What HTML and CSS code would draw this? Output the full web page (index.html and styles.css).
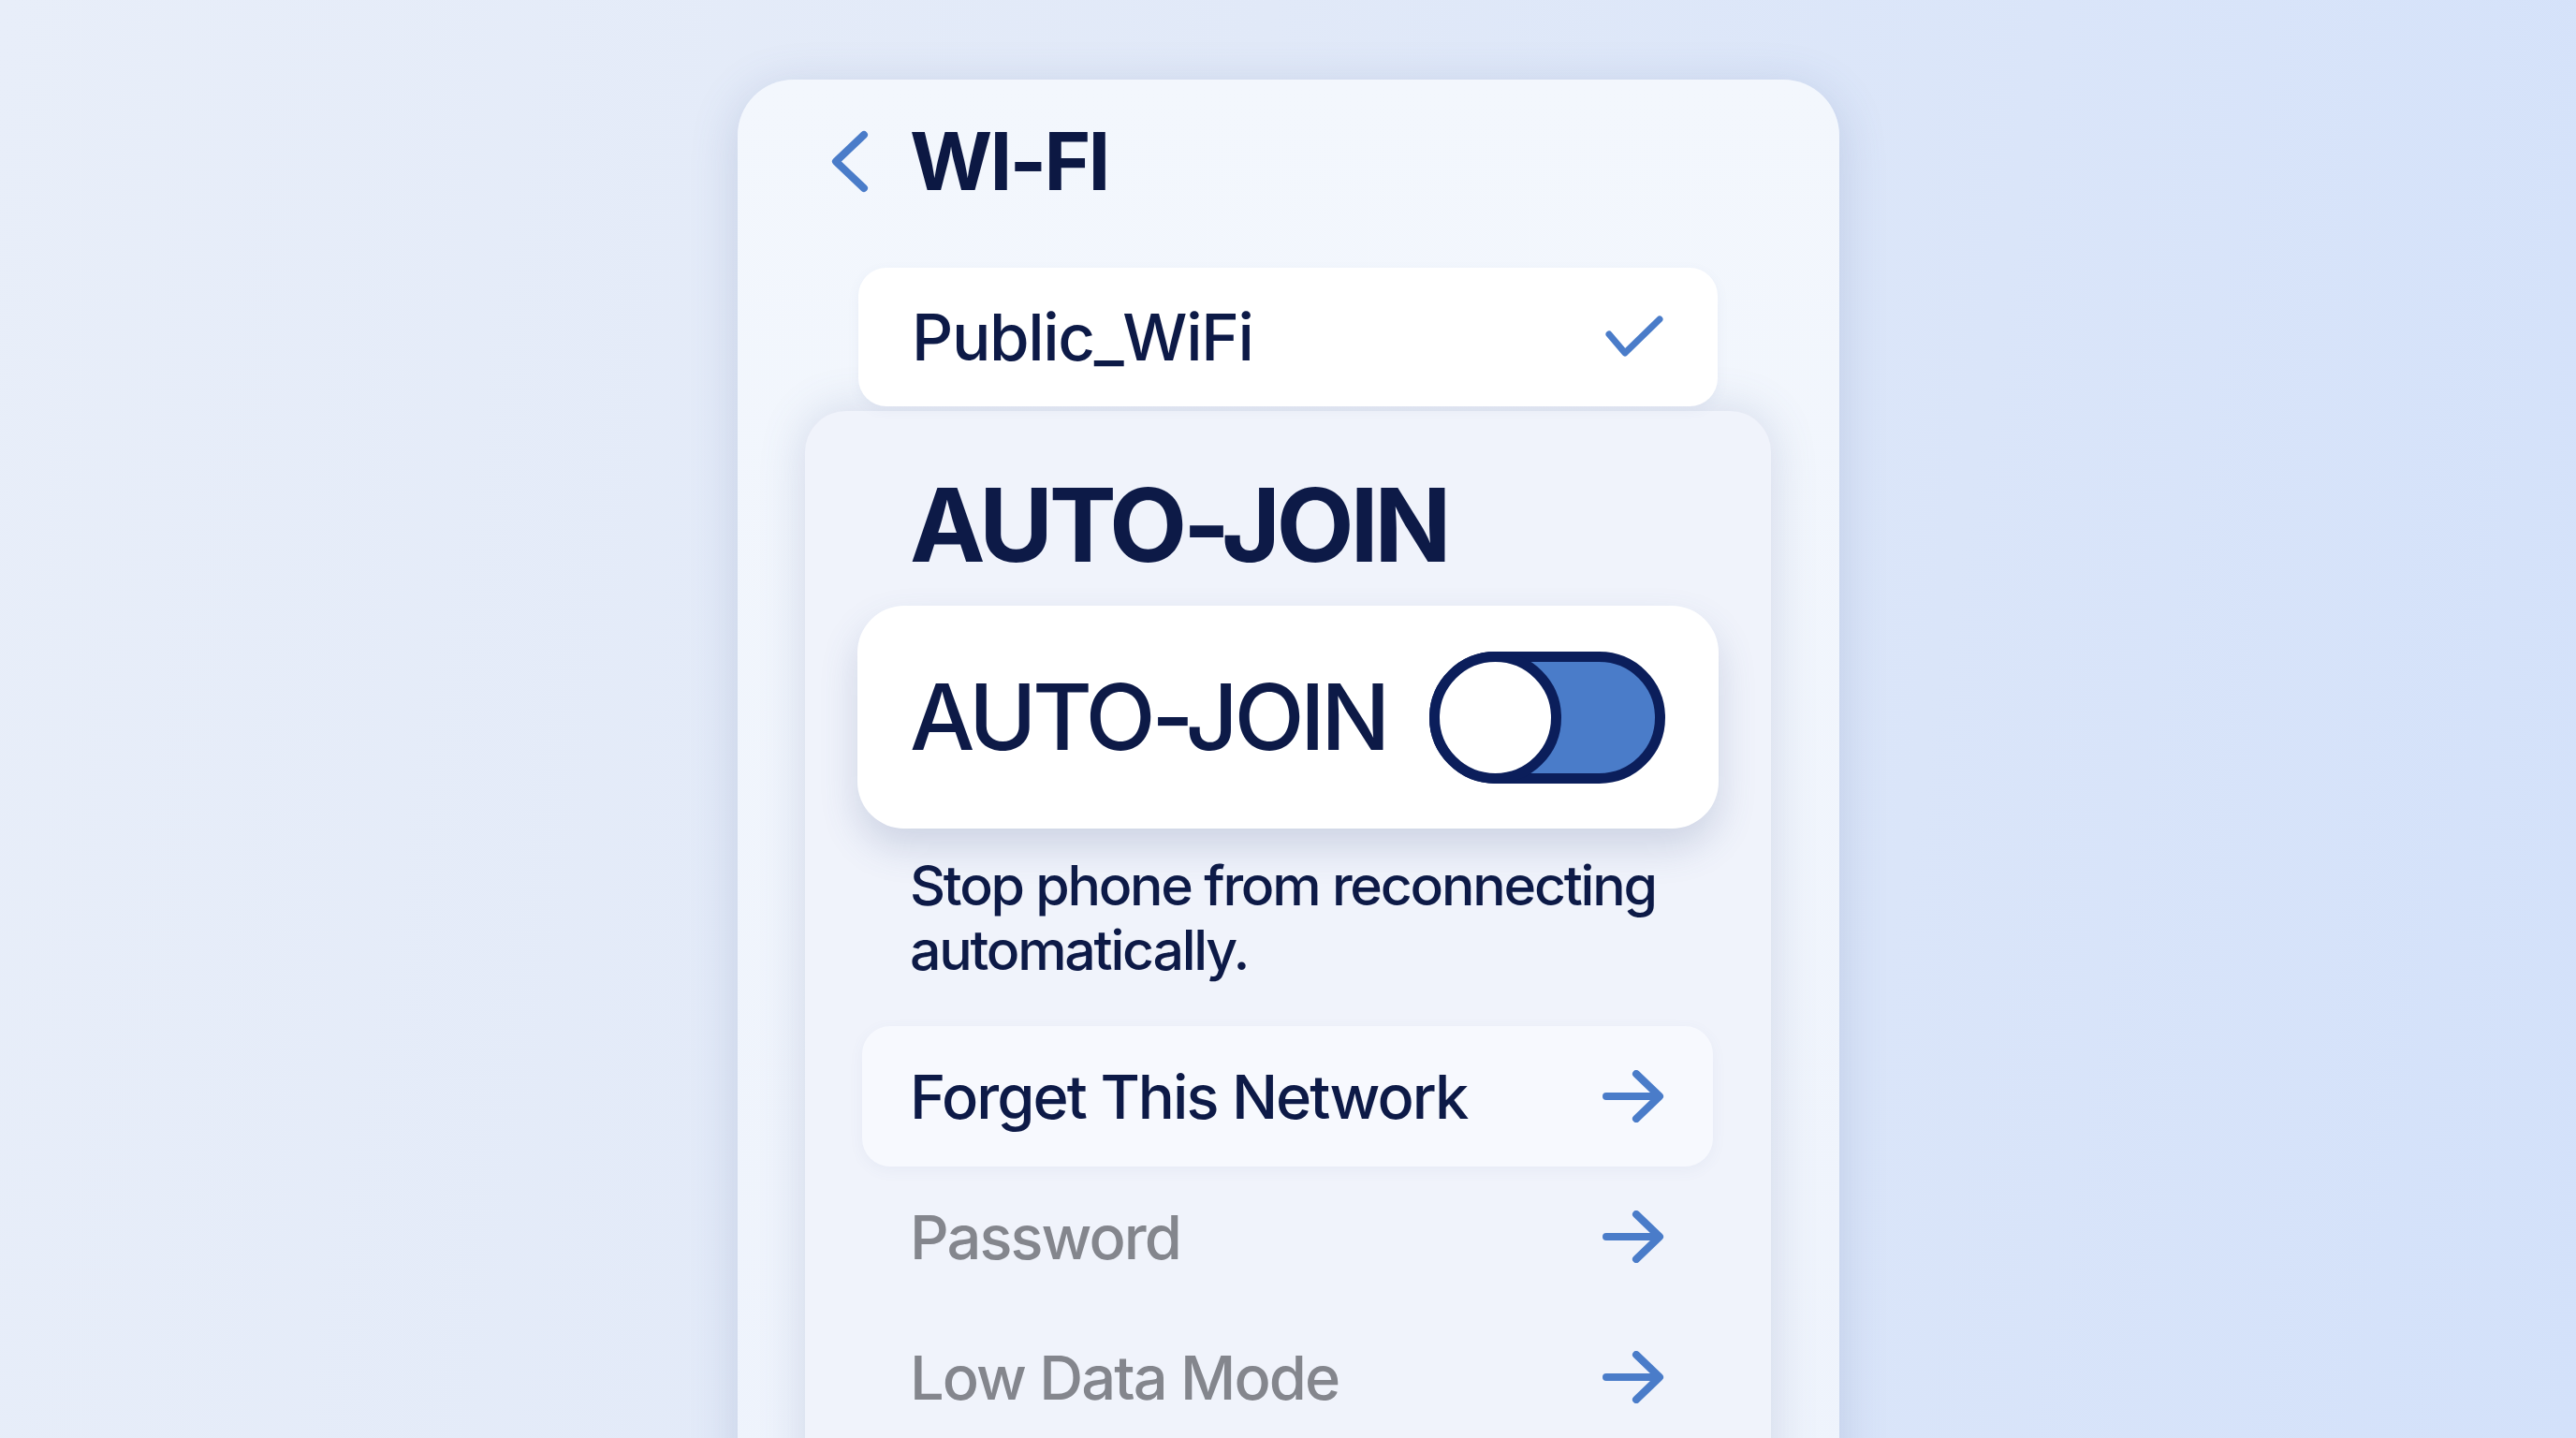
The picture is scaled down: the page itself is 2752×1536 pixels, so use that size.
FILE: index.html
```html
<!DOCTYPE html>
<html lang="en">
<head>
    <meta charset="UTF-8">
    <meta name="viewport" content="width=device-width, initial-scale=1.0">
    <title>Wi-Fi Settings</title>
    <link rel="stylesheet" href="styles.css">
</head>
<body>
    <div class="screen">
        <header class="nav">
            <svg class="back" width="46" height="73" viewBox="0 0 46 73">
                <path d="M38 8 L8 36.5 L38 65" />
            </svg>
            <h1 class="nav-title">WI-FI</h1>
        </header>

        <div class="network-card">
            <span class="network-name">Public_WiFi</span>
            <svg class="check" width="62" height="46" viewBox="0 0 62 46">
                <path d="M4 20 L21 40 L58 4" />
            </svg>
        </div>

        <section class="panel">
            <h2 class="panel-title">AUTO-JOIN</h2>

            <div class="toggle-card">
                <span class="toggle-label">AUTO-JOIN</span>
                <svg class="switch" width="252" height="141" viewBox="0 0 252 141">
                    <rect class="switch-track" x="5.5" y="5.5" width="241" height="130" rx="65" />
                    <circle class="switch-knob" cx="70.5" cy="70.5" r="65" />
                </svg>
            </div>

            <p class="hint">Stop phone from reconnecting automatically.</p>

            <ul class="options">
                <li class="option option-active">
                    <span>Forget This Network</span>
                    <svg class="arrow" width="66" height="56" viewBox="0 0 66 56"><path d="M4 28 H60 M36 4 L61 28 L36 52" /></svg>
                </li>
                <li class="option option-muted">
                    <span>Password</span>
                    <svg class="arrow" width="66" height="56" viewBox="0 0 66 56"><path d="M4 28 H60 M36 4 L61 28 L36 52" /></svg>
                </li>
                <li class="option option-muted">
                    <span>Low Data Mode</span>
                    <svg class="arrow" width="66" height="56" viewBox="0 0 66 56"><path d="M4 28 H60 M36 4 L61 28 L36 52" /></svg>
                </li>
            </ul>
        </section>
    </div>
</body>
</html>
```

FILE: styles.css
```css
html, body {
    margin: 0;
    height: 100%;
    overflow: hidden;
}
body {
    font-family: Inter, "Noto Sans", Arial, sans-serif;
    background: linear-gradient(100deg, #e8eef9 0%, #e1e9f8 45%, #d3e1fa 100%);
    color: #0d1a47;
}
.screen {
    box-sizing: border-box;
    width: 1177px;
    height: 1560px;
    margin: 85px 0 0 788px;
    padding-top: 37px;
    background: linear-gradient(180deg, #f3f7fd 0%, #eef3fc 100%);
    border-radius: 60px 60px 0 0;
    box-shadow: 0 10px 50px rgba(80, 105, 160, 0.22);
}
.nav {
    display: flex;
    align-items: center;
    gap: 41px;
    height: 100px;
    padding-left: 97px;
}
.back path, .check path, .arrow path {
    fill: none;
    stroke: #4a7cc9;
    stroke-width: 8;
    stroke-linecap: round;
    stroke-linejoin: round;
}
.check path {
    stroke-width: 7;
}
.nav-title {
    margin: 0;
    font-size: 85px;
    line-height: 1;
    font-weight: 700;
    letter-spacing: -0.033em;
    color: #0c1843;
}
.network-card {
    position: relative;
    z-index: 2;
    display: flex;
    align-items: center;
    justify-content: space-between;
    box-sizing: border-box;
    width: 918px;
    height: 148px;
    margin: 64px 0 0 129px;
    padding: 0 58px 0 57px;
    background: #fff;
    border-radius: 30px;
    box-shadow: 0 4px 14px rgba(90, 110, 160, 0.06);
}
.network-name {
    font-size: 69px;
    line-height: 1;
    font-weight: 500;
    letter-spacing: -0.02em;
}
.panel {
    box-sizing: border-box;
    width: 1032px;
    height: 1200px;
    margin: 5px 0 0 72px;
    padding: 68px 56px 0;
    background: #f0f3fb;
    border-radius: 44px 44px 0 0;
    box-shadow: 0 0 50px rgba(80, 100, 150, 0.2);
}
.panel-title {
    margin: 0 0 32px 56px;
    font-size: 108px;
    line-height: 1;
    font-weight: 700;
    letter-spacing: -0.041em;
}
.toggle-card {
    display: flex;
    align-items: center;
    justify-content: space-between;
    box-sizing: border-box;
    height: 238px;
    padding: 0 57px 0 56px;
    background: #fff;
    border-radius: 50px;
    box-shadow: 0 20px 40px rgba(70, 90, 140, 0.2);
}
.toggle-label {
    font-size: 98px;
    line-height: 1;
    font-weight: 500;
    letter-spacing: -0.046em;
}
.switch-track {
    fill: #4a7cc9;
    stroke: #0b1e5b;
    stroke-width: 11;
}
.switch-knob {
    fill: #fff;
    stroke: #0b1e5b;
    stroke-width: 11;
}
.hint {
    margin: 26px 0 0 56px;
    font-size: 59px;
    line-height: 69px;
    font-weight: 500;
    letter-spacing: -0.038em;
}
.options {
    list-style: none;
    margin: 47px 6px 0 5px;
    padding: 0;
}
.option {
    display: flex;
    align-items: center;
    justify-content: space-between;
    height: 150px;
    padding: 0 52px 0 51px;
    font-size: 65px;
    line-height: 1;
    font-weight: 500;
    letter-spacing: -0.03em;
    border-radius: 30px;
}
.option-active {
    background: #f7f9fe;
    box-shadow: 0 4px 16px rgba(90, 110, 160, 0.06);
}
.option-muted {
    color: #84868d;
}
```
